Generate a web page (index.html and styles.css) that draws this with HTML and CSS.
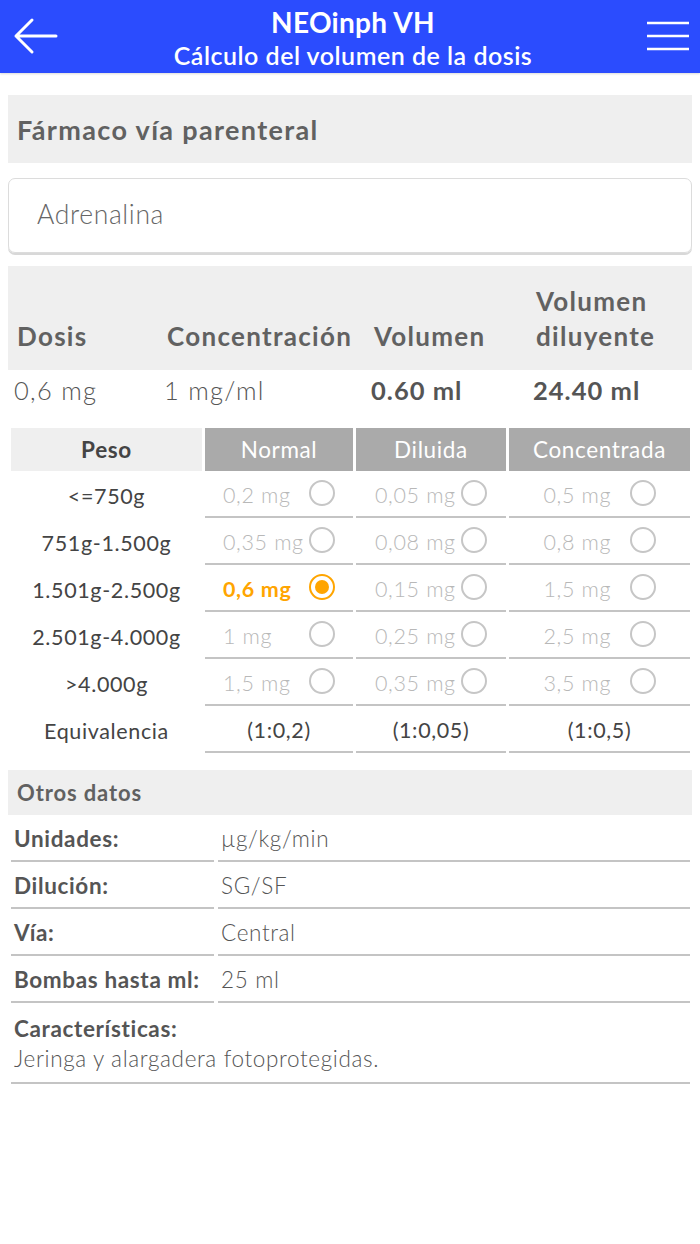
FILE: index.html
```html
<!DOCTYPE html>
<html lang="es">
<head>
<meta charset="utf-8">
<title>NEOinph VH</title>
<link rel="stylesheet" href="styles.css">
</head>
<body>
<header class="topbar">
  <svg class="back" width="48" height="40" viewBox="0 0 48 40"><path d="M44 19H4M20 3L4 19l16 16" fill="none" stroke="#fff" stroke-width="3" stroke-linecap="round" stroke-linejoin="round"/></svg>
  <div class="titles">
    <div class="title">NEOinph VH</div>
    <div class="subtitle">Cálculo del volumen de la dosis</div>
  </div>
  <svg class="menu" width="44" height="32" viewBox="0 0 44 32"><path d="M1 3h42M1 16h42M1 29h42" fill="none" stroke="#fff" stroke-width="2.5"/></svg>
</header>

<main class="page">
  <div class="section-title">Fármaco vía parenteral</div>
  <div class="search">Adrenalina</div>

  <div class="dose">
    <div class="dose-head">
      <div>Dosis</div>
      <div>Concentración</div>
      <div>Volumen</div>
      <div>Volumen<br>diluyente</div>
    </div>
    <div class="dose-vals">
      <div>0,6 mg</div>
      <div>1 mg/ml</div>
      <div class="b">0.60 ml</div>
      <div class="b">24.40 ml</div>
    </div>
  </div>

  <div class="weights">
    <div class="wh peso">Peso</div>
    <div class="wh">Normal</div>
    <div class="wh">Diluida</div>
    <div class="wh">Concentrada</div>

    <div class="wp">&lt;=750g</div>
    <div class="wc"><span class="v">0,2 mg</span><span class="radio"></span></div>
    <div class="wc"><span class="v">0,05 mg</span><span class="radio"></span></div>
    <div class="wc"><span class="v">0,5 mg</span><span class="radio"></span></div>

    <div class="wp">751g-1.500g</div>
    <div class="wc"><span class="v">0,35 mg</span><span class="radio"></span></div>
    <div class="wc"><span class="v">0,08 mg</span><span class="radio"></span></div>
    <div class="wc"><span class="v">0,8 mg</span><span class="radio"></span></div>

    <div class="wp">1.501g-2.500g</div>
    <div class="wc sel"><span class="v">0,6 mg</span><span class="radio"></span></div>
    <div class="wc"><span class="v">0,15 mg</span><span class="radio"></span></div>
    <div class="wc"><span class="v">1,5 mg</span><span class="radio"></span></div>

    <div class="wp">2.501g-4.000g</div>
    <div class="wc"><span class="v">1 mg</span><span class="radio"></span></div>
    <div class="wc"><span class="v">0,25 mg</span><span class="radio"></span></div>
    <div class="wc"><span class="v">2,5 mg</span><span class="radio"></span></div>

    <div class="wp">&gt;4.000g</div>
    <div class="wc"><span class="v">1,5 mg</span><span class="radio"></span></div>
    <div class="wc"><span class="v">0,35 mg</span><span class="radio"></span></div>
    <div class="wc"><span class="v">3,5 mg</span><span class="radio"></span></div>

    <div class="wp">Equivalencia</div>
    <div class="wc eq">(1:0,2)</div>
    <div class="wc eq">(1:0,05)</div>
    <div class="wc eq">(1:0,5)</div>
  </div>

  <div class="section-title small">Otros datos</div>
  <div class="info">
    <div class="il">Unidades:</div><div class="iv">µg/kg/min</div>
    <div class="il">Dilución:</div><div class="iv">SG/SF</div>
    <div class="il">Vía:</div><div class="iv">Central</div>
    <div class="il">Bombas hasta ml:</div><div class="iv">25 ml</div>
  </div>
  <div class="notes">
    <div class="il">Características:</div>
    <div class="iv">Jeringa y alargadera fotoprotegidas.</div>
  </div>
</main>
</body>
</html>
```

FILE: styles.css
```css
* { box-sizing: border-box; }
html, body { margin: 0; padding: 0; background: #fff; }
body {
  font-family: Lato, "Open Sans", "Liberation Sans", sans-serif;
  color: #555;
  width: 700px;
  letter-spacing: 0.04em;
}

.topbar {
  height: 73px;
  background: #2b4cfe;
  display: flex;
  align-items: center;
  justify-content: space-between;
  padding: 0 10px 0 12px;
  color: #fff;
  box-shadow: 0 1px 2px rgba(0,0,0,0.15);
}
.back { display: block; }
.menu { display: block; margin-top: -2px; }
.titles {
  text-align: center;
  flex: 1;
  align-self: flex-start;
  padding-top: 5px;
}
.title { font-weight: 700; font-size: 28px; line-height: 34px; letter-spacing: 0.01em; }
.subtitle { font-weight: 600; font-size: 25px; line-height: 32px; letter-spacing: 0.02em; }

.page { padding: 0 8px; }

.section-title {
  margin-top: 22px;
  height: 68px;
  background: #efefef;
  display: flex;
  align-items: center;
  padding-left: 9px;
  font-weight: 700;
  font-size: 27px;
  color: #616161;
  letter-spacing: 0.05em;
}
.section-title.small {
  margin-top: 17px;
  height: 45px;
  font-size: 22px;
  letter-spacing: 0.04em;
}

.search {
  margin-top: 15px;
  height: 75px;
  border: 1px solid #dcdcdc;
  border-radius: 7px;
  box-shadow: 0 2px 0 #d8d8d8;
  display: flex;
  align-items: center;
  padding-left: 28px;
  padding-bottom: 3px;
  font-weight: 300;
  font-size: 26.5px;
  color: #666;
}

.dose { margin-top: 13px; }
.dose-head, .dose-vals {
  display: grid;
  grid-template-columns: 150px 207px 162px 1fr;
}
.dose-head {
  background: #efefef;
  height: 104px;
  align-items: end;
  padding-bottom: 16px;
  font-weight: 700;
  font-size: 26px;
  line-height: 35px;
  color: #616161;
  letter-spacing: 0.05em;
}
.dose-head > div { padding-left: 9px; white-space: nowrap; }
.dose-vals {
  height: 40px;
  align-items: center;
  font-size: 25.5px;
  font-weight: 300;
  color: #555;
  letter-spacing: 0.05em;
}
.dose-vals > div { padding-left: 6px; white-space: nowrap; }
.dose-vals .b { font-weight: 700; letter-spacing: 0.04em; }

.weights {
  margin: 18px 2px 0 3px;
  display: grid;
  grid-template-columns: 191px 148px 150px 1fr;
  grid-template-rows: 43px;
  grid-auto-rows: 47px;
  column-gap: 3px;
}
.wh {
  background: #aaa;
  color: #fff;
  font-size: 22.5px;
  font-weight: 400;
  display: flex;
  align-items: center;
  justify-content: center;
}
.wh.peso { background: #efefef; color: #444; font-weight: 700; }
.wp {
  display: flex;
  align-items: center;
  justify-content: center;
  font-size: 21.5px;
  color: #444;
  padding-top: 2px;
  white-space: nowrap;
}
.wc {
  display: flex;
  align-items: center;
  justify-content: center;
  border-bottom: 2px solid #c4c4c4;
  padding-top: 2px;
}
.v {
  width: 86px;
  font-size: 21.5px;
  font-weight: 300;
  color: #b8b8b8;
  white-space: nowrap;
}
.radio {
  width: 26px;
  height: 26px;
  border: 2px solid #c6c6c6;
  border-radius: 50%;
  margin-top: -4px;
  flex: none;
  display: flex;
  align-items: center;
  justify-content: center;
}
.sel .v { color: #ffa500; font-weight: 700; }
.sel .radio { border-color: #ffa500; }
.sel .radio::after {
  content: "";
  width: 14px;
  height: 14px;
  border-radius: 50%;
  background: #ffa500;
}
.wc.eq { font-size: 21.5px; color: #444; }

.info {
  margin: 0 2px 0 3px;
  display: grid;
  grid-template-columns: 203px 1fr;
  grid-auto-rows: 47px;
  column-gap: 4px;
}
.il {
  font-weight: 700;
  font-size: 22.5px;
  color: #555;
  padding-left: 3px;
  white-space: nowrap;
}
.iv {
  font-weight: 300;
  font-size: 22.5px;
  color: #555;
  padding-left: 3px;
}
.info > div {
  border-bottom: 2px solid #c4c4c4;
  display: flex;
  align-items: center;
  padding-top: 2px;
}
.notes {
  margin: 0 2px 0 3px;
  border-bottom: 2px solid #c4c4c4;
  padding: 11px 0 8px;
  line-height: 30px;
}
```
